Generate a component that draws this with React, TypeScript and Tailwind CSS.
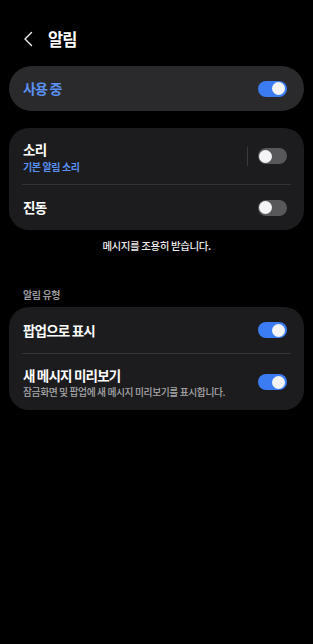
import React from 'react';

const font = { fontFamily: '"Noto Sans CJK KR", "Noto Sans", sans-serif' };

const Toggle = ({ on }: { on: boolean }) => (
  <div
    className={`relative h-[16px] w-[29px] shrink-0 rounded-full ${on ? 'bg-[#3b7cf3]' : 'bg-[#58585b]'}`}
  >
    <div
      className={`absolute top-[1.5px] h-[13px] w-[13px] rounded-full bg-[#f4f4f6] ${on ? 'right-[2px]' : 'left-[1px]'}`}
    />
  </div>
);

const Divider = () => <div className="mx-[13px] h-px bg-[#333335]" />;

export default function App() {
  return (
    <div className="min-h-[644px] w-full bg-black pt-[28px] text-white" style={font}>
      {/* Header */}
      <div className="flex h-[22px] items-center pl-[23px]">
        <svg width="10" height="16" viewBox="0 0 10 16" fill="none">
          <path d="M8.5 1.5 L2 8 L8.5 14.5" stroke="#f2f2f2" strokeWidth="1.4" strokeLinecap="round" strokeLinejoin="round" />
        </svg>
        <span className="ml-[15px] text-[16.5px] font-bold tracking-[-0.05em]">알림</span>
      </div>

      <div className="px-[9px]">
        {/* Master switch */}
        <div className="mt-[16px] flex h-[45px] items-center justify-between rounded-full bg-[#2a2a2c] pl-[14px] pr-[17px]">
          <span className="text-[14px] font-bold tracking-[-0.06em] text-[#5a90f2]">사용 중</span>
          <Toggle on />
        </div>

        {/* Sound & vibration */}
        <div className="mt-[17px] rounded-[20px] bg-[#1c1c1e]">
          <div className="flex h-[56px] items-center pl-[14px] pr-[17px]">
            <div className="flex flex-1 flex-col">
              <span className="text-[13.5px] font-bold leading-[20px] tracking-[-0.05em]">소리</span>
              <span className="text-[10px] font-bold leading-[15px] tracking-[-0.04em] text-[#5a90f2]">기본 알림 소리</span>
            </div>
            <div className="mr-[10px] h-[19px] w-px bg-[#3a3a3c]" />
            <Toggle on={false} />
          </div>
          <Divider />
          <div className="flex h-[45px] items-center justify-between pl-[14px] pr-[17px]">
            <span className="text-[13.5px] font-bold tracking-[-0.05em]">진동</span>
            <Toggle on={false} />
          </div>
        </div>

        <div className="mt-[8px] text-center text-[10.5px] font-medium leading-[16px] tracking-[-0.04em] text-[#ececec]">
          메시지를 조용히 받습니다.
        </div>

        <div className="mt-[33px] pl-[14px] text-[10px] font-bold leading-[16px] tracking-[-0.04em] text-[#9a9a9c]">알림 유형</div>

        {/* Notification type */}
        <div className="mt-[4px] rounded-[20px] bg-[#1c1c1e]">
          <div className="flex h-[46px] items-center justify-between pl-[14px] pr-[17px]">
            <span className="text-[13.5px] font-bold tracking-[-0.06em]">팝업으로 표시</span>
            <Toggle on />
          </div>
          <Divider />
          <div className="flex h-[56px] items-center justify-between pl-[14px] pr-[17px]">
            <div className="flex flex-col">
              <span className="text-[13.5px] font-bold leading-[20px] tracking-[-0.06em]">새 메시지 미리보기</span>
              <span className="text-[9.75px] font-medium leading-[15px] tracking-[-0.04em] text-[#a8a8aa]">
                잠금화면 및 팝업에 새 메시지 미리보기를 표시합니다.
              </span>
            </div>
            <Toggle on />
          </div>
        </div>
      </div>
    </div>
  );
}
